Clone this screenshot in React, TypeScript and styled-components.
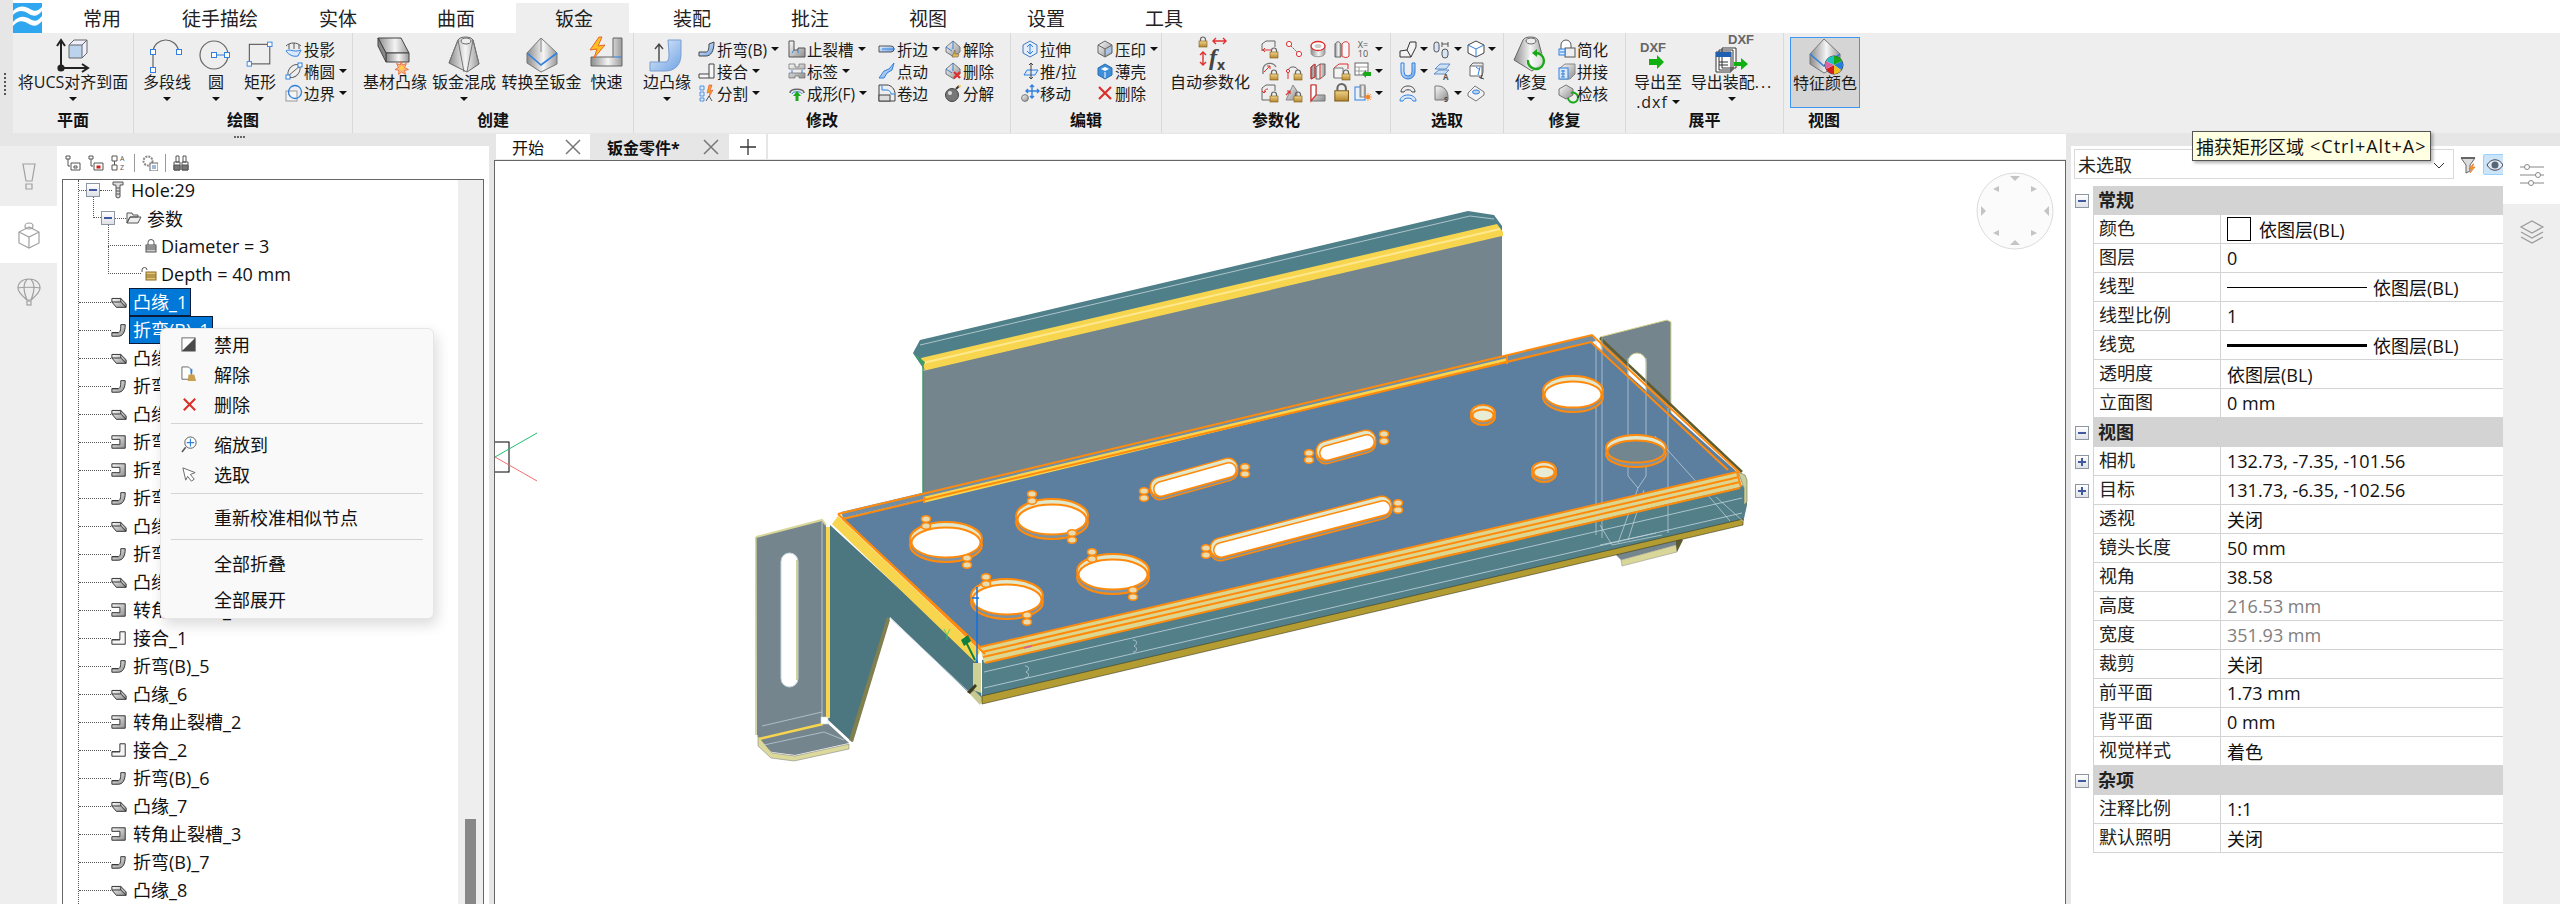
import React from "react";
import styled, { createGlobalStyle } from "styled-components";

const FONT = `"Open Sans", "Noto Sans CJK SC", sans-serif`;

const GlobalStyle = createGlobalStyle`
  html, body { margin: 0; padding: 0; background: #e6e6e6; }
  body { font-family: ${FONT}; color: #111; }
  * { box-sizing: border-box; }
`;

const Page = styled.div`
  position: relative;
  width: 2560px;
  height: 904px;
  overflow: hidden;
  display: flex;
  flex-direction: column;
  background: #e6e6e6;
`;

const Svg = styled.svg<{ $ml?: number; $mt?: number }>`
  display: block;
  flex: none;
  overflow: visible;
  margin-left: ${(p) => p.$ml ?? 0}px;
  margin-top: ${(p) => p.$mt ?? 0}px;
`;
const HiddenDefs = styled.svg`
  position: absolute;
`;

/* ---------- top tabs ---------- */
const TabBar = styled.div`
  display: flex;
  height: 33px;
  background: #fff;
  flex: none;
`;
const Grip = styled.div`
  width: 13px;
  background: #e6e6e6;
  flex: none;
`;
const LogoBox = styled.div`
  width: 31px;
  padding-top: 3px;
  flex: none;
`;
const Tab = styled.div<{ $active?: boolean }>`
  width: 113px;
  margin-right: 5px;
  margin-top: 3px;
  display: flex;
  align-items: center;
  justify-content: center;
  font-size: 19px;
  padding-left: 3px;
  color: #222;
  background: ${(p) => (p.$active ? "#eeeeee" : "transparent")};
`;

/* ---------- ribbon ---------- */
const Ribbon = styled.div`
  display: flex;
  height: 100px;
  flex: none;
  background: #eeeeee;
`;
const RibbonGrip = styled.div`
  width: 13px;
  flex: none;
  background: #e6e6e6;
  display: flex;
  flex-direction: column;
  align-items: center;
  gap: 2px;
  padding-top: 40px;
  padding-right: 3px;
  i {
    width: 2px;
    height: 2px;
    background: #555;
  }
`;
const Group = styled.div<{ $w: number; $last?: boolean }>`
  width: ${(p) => p.$w}px;
  flex: none;
  display: flex;
  flex-direction: column;
  border-right: ${(p) => (p.$last ? "none" : "1px solid #d9d9d9")};
`;
const GroupBody = styled.div<{ $pad?: number }>`
  height: 76px;
  display: flex;
  padding-left: ${(p) => p.$pad ?? 0}px;
`;
const GroupLabel = styled.div`
  height: 24px;
  line-height: 22px;
  text-align: center;
  font-size: 16px;
  font-weight: 700;
  color: #111;
`;
const BigBtn = styled.div<{ $w: number; $on?: boolean }>`
  width: ${(p) => p.$w}px;
  flex: none;
  display: flex;
  flex-direction: column;
  align-items: center;
  font-size: 16px;
  line-height: 20px;
  white-space: nowrap;
  color: #1a1a1a;
  padding-top: ${(p) => (p.$on ? 1 : 5)}px;
  margin-top: ${(p) => (p.$on ? 4 : 0)}px;
  height: ${(p) => (p.$on ? 71 : 76)}px;
  background: ${(p) => (p.$on ? "#d5d5d5" : "transparent")};
  border: ${(p) => (p.$on ? "1px solid #3f96f0" : "none")};
`;
const BigIcon = styled.div`
  height: 34px;
  display: flex;
  align-items: center;
  justify-content: center;
`;
const Caret = styled.span`
  display: inline-block;
  flex: none;
  width: 0;
  height: 0;
  border-left: 4px solid transparent;
  border-right: 4px solid transparent;
  border-top: 4px solid #111;
`;
const CaretLine = styled.div`
  height: 14px;
  display: flex;
  align-items: center;
`;
const SecondLine = styled.div`
  display: flex;
  align-items: center;
  gap: 4px;
  letter-spacing: 1px;
`;
const Dotted = styled.span`
  letter-spacing: 2px;
`;
const SmallCol = styled.div<{ $w?: number; $ml?: number }>`
  width: ${(p) => (p.$w ? `${p.$w}px` : "auto")};
  margin-left: ${(p) => p.$ml ?? 0}px;
  flex: none;
  display: flex;
  flex-direction: column;
  padding-top: 5px;
`;
const SmallBtn = styled.div`
  height: 22px;
  display: flex;
  align-items: center;
  gap: 1px;
  font-size: 15.5px;
  white-space: nowrap;
  color: #1a1a1a;
  ${Caret} {
    margin-left: 3px;
  }
`;
const IconGrid = styled.div<{ $cols: string }>`
  display: grid;
  grid-template-columns: ${(p) => p.$cols};
  grid-auto-rows: 22px;
  padding-top: 5px;
  justify-items: center;
  align-items: center;
`;
const IconCell = styled.div`
  display: flex;
  align-items: center;
  justify-self: start;
  gap: 3px;
`;
const XTen = styled.span`
  font-size: 9px;
  line-height: 9px;
  width: 18px;
  height: 18px;
  color: #555;
  display: flex;
  flex-direction: column;
  align-items: center;
`;

/* ---------- body ---------- */
const Body = styled.div`
  flex: 1;
  display: flex;
  min-height: 0;
  position: relative;
`;
const SplitDots = styled.div`
  position: absolute;
  left: 234px;
  top: 3px;
  display: flex;
  gap: 1px;
  i {
    width: 2px;
    height: 2px;
    background: #666;
  }
`;
const LeftDock = styled.div`
  width: 489px;
  margin-top: 13px;
  display: flex;
  flex: none;
`;
const Rail = styled.div`
  width: 57px;
  flex: none;
  display: flex;
  flex-direction: column;
  background: #eeeeee;
`;
const RailTab = styled.div<{ $on?: boolean; $h: number }>`
  height: ${(p) => p.$h}px;
  display: flex;
  align-items: center;
  justify-content: center;
  background: ${(p) => (p.$on ? "#fff" : "transparent")};
`;
const BrowserPanel = styled.div`
  flex: 1;
  display: flex;
  flex-direction: column;
  background: #fff;
  padding: 0 5px;
  min-width: 0;
`;
const BrowserTools = styled.div`
  height: 33px;
  flex: none;
  display: flex;
  align-items: center;
  padding-left: 3px;
  gap: 7px;
`;
const ToolSep = styled.span`
  width: 1px;
  height: 18px;
  background: #999;
`;
const TreeBox = styled.div`
  flex: 1;
  min-height: 0;
  display: flex;
  border: 1px solid #666;
  border-bottom: none;
`;
const TreeScroll = styled.div`
  flex: 1;
  min-width: 0;
  overflow: hidden;
`;
const TreeTrunk = styled.div`
  margin-left: 15px;
  border-left: 1px dotted #555;
  display: flex;
  flex-direction: column;
`;
const TreeRow = styled.div<{ $first?: boolean }>`
  height: ${(p) => (p.$first ? 24 : 28)}px;
  padding-bottom: ${(p) => (p.$first ? 4 : 0)}px;
  flex: none;
  display: flex;
  align-items: center;
  font-size: 18px;
  color: #111;
  white-space: nowrap;
`;
const Dots = styled.span<{ $w: number }>`
  flex: none;
  width: ${(p) => p.$w}px;
  border-top: 1px dotted #555;
`;
const Elbow = styled.span<{ $left: number; $w: number; $up: number; $h: number }>`
  flex: none;
  align-self: flex-start;
  margin-left: ${(p) => p.$left}px;
  margin-top: -${(p) => p.$up}px;
  width: ${(p) => p.$w}px;
  height: ${(p) => p.$h}px;
  border-left: 1px dotted #555;
  border-bottom: 1px dotted #555;
`;
const Expander = styled.span<{ $plus?: boolean }>`
  flex: none;
  position: relative;
  width: 14px;
  height: 14px;
  border: 1px solid #8d96a3;
  background: linear-gradient(#fff, #dfe1e6);
  &::before {
    content: "";
    position: absolute;
    left: 2px;
    right: 2px;
    top: 5px;
    height: 2px;
    background: #3f5aa0;
  }
  ${(p) =>
    p.$plus &&
    `&::after {
    content: "";
    position: absolute;
    top: 2px;
    bottom: 2px;
    left: 5px;
    width: 2px;
    background: #3f5aa0;
  }`}
`;
const NodeLabel = styled.span<{ $sel?: boolean }>`
  margin-left: 2px;
  height: 28px;
  line-height: 26px;
  padding: 0 3px;
  background: ${(p) => (p.$sel ? "#0078d7" : "transparent")};
  color: ${(p) => (p.$sel ? "#fff" : "#111")};
  border: 1px solid ${(p) => (p.$sel ? "#0a1c3a" : "transparent")};
`;
const PlainLabel = styled.span<{ $ml: number }>`
  margin-left: ${(p) => p.$ml}px;
`;
const ScrollTrack = styled.div`
  width: 25px;
  flex: none;
  background: #eeeeee;
  padding: 639px 7px 0;
`;
const ScrollThumb = styled.div`
  height: 100px;
  background: #888;
`;

/* ---------- context menu ---------- */
const Menu = styled.div`
  position: absolute;
  left: 160px;
  top: 328px;
  width: 274px;
  height: 291px;
  padding: 0 10px;
  background: #f9f9f9;
  border: 1px solid #e6e6e6;
  border-radius: 6px;
  box-shadow: 3px 6px 14px rgba(0, 0, 0, 0.14);
  font-size: 18px;
  color: #111;
`;
const MenuItem = styled.div<{ $tall?: boolean }>`
  height: ${(p) => (p.$tall ? 36 : 30)}px;
  display: flex;
  align-items: center;
`;
const MenuIcon = styled.span`
  width: 43px;
  padding-left: 10px;
  flex: none;
  display: flex;
`;
const MenuSep = styled.div`
  height: 1px;
  margin: 4px 0 5px;
  background: #d4d4d4;
`;

/* ---------- centre ---------- */
const Gutter = styled.div`
  width: 5px;
  flex: none;
`;
const Center = styled.div`
  width: 1572px;
  flex: none;
  display: flex;
  flex-direction: column;
  padding-top: 1px;
`;
const DocTabs = styled.div`
  height: 26px;
  flex: none;
  display: flex;
  padding: 0 0 1px 2px;
  gap: 1px;
`;
const DocTab = styled.div<{ $w: number; $on?: boolean }>`
  width: ${(p) => p.$w}px;
  flex: none;
  display: flex;
  align-items: center;
  justify-content: space-between;
  padding: 0 9px 0 16px;
  font-size: 16px;
  font-weight: ${(p) => (p.$on ? 700 : 400)};
  background: ${(p) => (p.$on ? "#e6e6e6" : "#fff")};
  color: #111;
`;
const AddTab = styled.div`
  width: 37px;
  flex: none;
  background: #fff;
  display: flex;
  align-items: center;
  justify-content: center;
  margin-right: 1px;
`;
const TabFill = styled.div`
  flex: 1;
  background: #fff;
`;
const Viewport = styled.div`
  flex: 1;
  position: relative;
  background: #fff;
  border: 1px solid #666;
  border-bottom: none;
  overflow: hidden;
`;
const ModelCanvas = styled.svg`
  position: absolute;
  left: 0;
  top: 0;
  display: block;
`;

/* ---------- properties ---------- */
const RightDock = styled.div`
  flex: 1;
  margin-top: 13px;
  display: flex;
  min-width: 0;
`;
const PropPanel = styled.div`
  width: 432px;
  flex: none;
  background: #fff;
  display: flex;
  flex-direction: column;
`;
const PropTop = styled.div`
  height: 40px;
  flex: none;
  display: flex;
  align-items: flex-start;
  padding: 3px 3px 0 3px;
`;
const Combo = styled.div`
  width: 380px;
  height: 30px;
  flex: none;
  border: 1px solid #d9d9d9;
  display: flex;
  align-items: center;
  justify-content: space-between;
  padding: 0 8px 0 3px;
  font-size: 18px;
  color: #222;
`;
const ToolBtn = styled.div<{ $on?: boolean }>`
  width: 23px;
  height: 21px;
  margin: 5px 0 0 3px;
  flex: none;
  display: flex;
  align-items: center;
  justify-content: center;
  border-radius: 2px;
  background: ${(p) => (p.$on ? "#cce4f7" : "transparent")};
  border: 1px solid ${(p) => (p.$on ? "#99d1ff" : "transparent")};
`;
const PropHeader = styled.div`
  height: 29px;
  display: grid;
  grid-template-columns: 22px 1fr;
  align-items: center;
  font-size: 18px;
  font-weight: 700;
  color: #222;
`;
const HeaderText = styled.div`
  height: 29px;
  line-height: 29px;
  padding-left: 5px;
  background: #d3d3d3;
`;
const PropRow = styled.div`
  height: 29px;
  display: grid;
  grid-template-columns: 22px 128px 1fr;
  font-size: 18px;
  color: #222;
`;
const ExpandCell = styled.div`
  display: flex;
  align-items: center;
  padding-left: 4px;
`;
const PropName = styled.div`
  line-height: 27px;
  padding-left: 5px;
  border-left: 1px solid #d3d3d3;
  border-right: 1px solid #d3d3d3;
  border-bottom: 1px solid #d3d3d3;
`;
const PropValue = styled.div<{ $dim?: boolean }>`
  display: flex;
  align-items: center;
  gap: 6px;
  padding-left: 6px;
  border-bottom: 1px solid #d3d3d3;
  color: ${(p) => (p.$dim ? "#808080" : "#111")};
  white-space: nowrap;
`;
const Swatch = styled.span`
  width: 24px;
  height: 24px;
  margin-right: 2px;
  flex: none;
  background: #fff;
  border: 1px solid #000;
`;
const LineSample = styled.span<{ $h: number }>`
  width: 140px;
  height: ${(p) => p.$h}px;
  flex: none;
  background: #000;
`;
const Tooltip = styled.div`
  position: absolute;
  left: 2192px;
  top: 131px;
  width: 239px;
  height: 30px;
  display: flex;
  align-items: center;
  gap: 6px;
  padding-left: 3px;
  background: #ffffe1;
  border: 1px solid #555;
  box-shadow: 2px 2px 3px rgba(0, 0, 0, 0.3);
  font-size: 18px;
  color: #111;
  white-space: nowrap;
`;
const TipKeys = styled.span`
  letter-spacing: 1px;
`;

/* ---------- icon drawing ---------- */
const Defs = () => (
  <HiddenDefs width="0" height="0">
    <defs>
      <linearGradient id="metal" x1="0" y1="0" x2="1" y2="1">
        <stop offset="0" stopColor="#fbfbfb" />
        <stop offset="1" stopColor="#8e8e8e" />
      </linearGradient>
      <linearGradient id="metalH" x1="0" y1="0" x2="1" y2="0">
        <stop offset="0" stopColor="#8c8c8c" />
        <stop offset="0.55" stopColor="#f5f5f5" />
        <stop offset="1" stopColor="#9a9a9a" />
      </linearGradient>
      <linearGradient id="blueG" x1="0" y1="0" x2="1" y2="1">
        <stop offset="0" stopColor="#eaf2fc" />
        <stop offset="1" stopColor="#6fa2e4" />
      </linearGradient>
      <linearGradient id="gold" x1="0" y1="0" x2="0" y2="1">
        <stop offset="0" stopColor="#f0d48a" />
        <stop offset="1" stopColor="#b8862e" />
      </linearGradient>
    </defs>
  </HiddenDefs>
);

const Lock = ({ x, y }: { x: number; y: number }) => (
  <g transform={`translate(${x} ${y})`}>
    <path d="M1.5 4V2.5a2.5 2.5 0 0 1 5 0V4" fill="none" stroke="#666" strokeWidth="1.2" />
    <rect x="0" y="4" width="8" height="6" fill="url(#gold)" stroke="#7a5a1a" strokeWidth="0.6" />
  </g>
);
const Handle = ({ x, y, s = 4 }: { x: number; y: number; s?: number }) => (
  <rect x={x - s / 2} y={y - s / 2} width={s} height={s} fill="#fff" stroke="#2f80e0" strokeWidth="1" />
);
const BLUE = "#2f80e0";
const GR = "#666";
const RD = "#e03030";

const small: Record<string, React.ReactNode> = {
  project: (
    <>
      <path d="M1 6C5 2 12 2 16 6M4 4v5M9 3v6M14 5v4" fill="none" stroke="#555" strokeWidth="1" />
      <path d="M1 11c4-3 7 2 15-1l-3 6c-5 1-9-1-12-5z" fill="#dbe9fa" stroke={BLUE} />
    </>
  ),
  ellipse: (
    <>
      <ellipse cx="9" cy="9" rx="5" ry="7.5" transform="rotate(40 9 9)" fill="none" stroke={GR} />
      <path d="M3 14L15 4" stroke={GR} />
      <Handle x={3} y={15} />
      <Handle x={15} y={3} />
    </>
  ),
  boundary: (
    <>
      <rect x="1" y="7" width="11" height="10" fill="#f4f4f4" stroke="#999" />
      <circle cx="10" cy="8" r="6.5" fill="none" stroke={BLUE} strokeWidth="1.3" />
    </>
  ),
  bend: (
    <path d="M1 16v-4h7c2 0 3-2 3-8l5-2c0 9-3 14-8 14z" fill="url(#blueG)" stroke="#444" />
  ),
  join: <path d="M1 16v-4h10V2h5v14z M11 12v4" fill="#f6f6f6" stroke="#444" />,
  split: (
    <>
      <path d="M2 2h4v4H2zM2 8h4v4H2zM2 14h4v3H2z" fill="#dfe9f7" stroke={BLUE} strokeWidth="0.8" />
      <path d="M11 1l-2 8 3-1-1 5 4-7-3 1 2-6z" fill="#f5a623" stroke={RD} strokeWidth="0.5" />
      <path d="M8 17l3-5 3 5" fill="none" stroke="#555" />
    </>
  ),
  relief: (
    <>
      <path d="M1 1h5v9h4v-2h7v9H1z" fill="url(#metal)" stroke="#555" />
      <path d="M6 10l-2 3M10 10v3" stroke={BLUE} />
    </>
  ),
  tag: (
    <>
      <path d="M1 2h6v3h4V2h6v5H1zM1 11h16v5h-6v-2H7v2H1z" fill="url(#metal)" stroke="#777" strokeWidth="0.8" />
      <path d="M4 8v3M14 8v3" stroke={BLUE} />
    </>
  ),
  form: (
    <>
      <path d="M2 9c0-5 14-5 14 0" fill="none" stroke="#666" strokeWidth="1.5" />
      <path d="M4 10c0-3 10-3 10 0" fill="none" stroke={BLUE} />
      <path d="M9 7l4 5h-2.5v5h-3v-5H5z" fill="#1faa1f" />
    </>
  ),
  hem: (
    <>
      <path d="M1 6h12a3 3 0 0 1 0 6H1z" fill="url(#blueG)" stroke="#555" />
      <path d="M4 9h13" stroke={BLUE} />
    </>
  ),
  jog: <path d="M1 16l5-7 5-2 5-6-2 7-5 3-3 5z" fill="url(#blueG)" stroke={BLUE} />,
  roll: (
    <>
      <path d="M1 1h8c4 0 8 4 8 9v7H1z" fill="none" stroke="#444" />
      <path d="M4 1v5h5c2 0 4 2 4 4h4" fill="#e8eef7" stroke={BLUE} />
      <rect x="1" y="11" width="11" height="6" fill="#ddd" stroke="#444" />
    </>
  ),
  unbend: (
    <>
      <path d="M9 1l7 6v5l-6 5-8-5V7z" fill="url(#metal)" stroke="#777" />
      <path d="M9 1v8M2 7l6 4" stroke={BLUE} />
      <path d="M11 10v4h4l-1 3H8z" fill="#e6b84a" stroke="#555" strokeWidth="0.5" />
    </>
  ),
  delFeat: (
    <>
      <path d="M9 1l7 6v5l-6 5-8-5V7z" fill="url(#metal)" stroke="#777" />
      <path d="M9 1v8M2 7l6 4" stroke={BLUE} />
      <path d="M10 10l6 6M16 10l-6 6" stroke={RD} strokeWidth="2.4" />
    </>
  ),
  bomb: (
    <>
      <circle cx="8" cy="11" r="6.5" fill="#777" stroke="#444" />
      <circle cx="6" cy="9" r="2" fill="#ddd" />
      <path d="M12 5l3-3" stroke="#333" strokeWidth="2" />
      <path d="M14 2l3-1-1 3z" fill="#f0c020" />
    </>
  ),
  stretch: (
    <>
      <path d="M9 1l7 4v8l-7 4-7-4V5z" fill="#e4eefa" stroke="#4477bb" />
      <path d="M9 4v10M6 7l3-3 3 3M6 11l3 3 3-3" fill="none" stroke={BLUE} />
    </>
  ),
  pushpull: (
    <>
      <path d="M3 13L6 8h11l-3 5z" fill="#dbe9fa" stroke={BLUE} />
      <path d="M10 1v16M8 3l2-2 2 2M8 15l2 2 2-2" fill="none" stroke="#444" />
    </>
  ),
  move: (
    <>
      <path d="M11 1v13M5 7h13M9 3l2-2 2 2M9 12l2 2 2-2M7 5L5 7l2 2M16 5l2 2-2 2" fill="none" stroke={BLUE} strokeWidth="1.4" />
      <circle cx="4" cy="14" r="3.4" fill="url(#metal)" stroke="#777" />
    </>
  ),
  imprint: (
    <>
      <path d="M9 1l7 4v8l-7 4-7-4V5z" fill="url(#metal)" stroke="#666" />
      <path d="M9 9v8M2 5l7 4 7-4" fill="none" stroke="#666" />
      <path d="M10 10l5-3v5l-5 3z" fill="#a7c5ea" />
    </>
  ),
  shell: (
    <>
      <path d="M9 2l7 4v7l-7 4-7-4V6z" fill="#3f8ed8" stroke="#2a6cb0" />
      <path d="M5 7l4-2 4 2-4 2z" fill="#fff" />
      <path d="M9 10v6" stroke="#fff" />
    </>
  ),
  redx: <path d="M3 3l12 12M15 3L3 15" stroke="#d9302a" strokeWidth="2.2" />,
  pa1: (
    <>
      <path d="M1 11V4l4-3h9v6" fill="none" stroke="#666" />
      <path d="M1 10h9M2 10l2-2M2 10l2 2" fill="none" stroke={RD} />
      <Lock x={9} y={8} />
    </>
  ),
  pa2: (
    <>
      <circle cx="4" cy="4" r="2.6" fill="#fff" stroke={RD} />
      <circle cx="14" cy="14" r="2.6" fill="#fff" stroke={RD} />
      <path d="M6 6l6 6" stroke="#666" strokeDasharray="2 1" />
    </>
  ),
  pa3: (
    <>
      <path d="M2 5v8c0 5 14 5 14 0V5" fill="url(#metalH)" stroke="#999" />
      <ellipse cx="9" cy="6" rx="7" ry="4.5" fill="#fff" stroke={RD} strokeWidth="1.3" />
      <ellipse cx="9" cy="6" rx="3.5" ry="2" fill="#ccc" />
    </>
  ),
  pa4: (
    <>
      <path d="M2 4c2-3 4-3 6 0v13H2z" fill="url(#metalH)" stroke="#666" />
      <path d="M9 4c2-3 6-3 7 0v12c-1 2-5 2-7 0z" fill="#f8f8f8" stroke={RD} />
    </>
  ),
  pb1: (
    <>
      <path d="M2 12V7a7 7 0 0 1 13-2" fill="none" stroke="#777" strokeWidth="1.3" />
      <path d="M3 10l6-6M6 4h3v3" fill="none" stroke={RD} />
      <Lock x={9} y={8} />
    </>
  ),
  pb2: (
    <>
      <path d="M3 8a5.5 5.5 0 0 1 10 0" fill="none" stroke="#666" />
      <path d="M3 8v9" stroke={RD} />
      <circle cx="3" cy="9" r="1.6" fill="#fff" stroke={RD} />
      <Lock x={9} y={8} />
    </>
  ),
  pb3: (
    <>
      <path d="M2 5l4-3v13l-4 2zM7 5l4-3h5v11l-5 4H7z" fill="url(#metalH)" stroke="#666" />
      <path d="M2 5l4-3v13l-4 2zM11 2v15" fill="none" stroke={RD} />
    </>
  ),
  pb4: (
    <>
      <path d="M1 16V6l5-4h9v5" fill="none" stroke={RD} />
      <path d="M1 6h9v10H1z" fill="#f4f4f4" stroke="#777" />
      <Lock x={9} y={8} />
    </>
  ),
  pb5: (
    <>
      <rect x="1" y="1" width="13" height="12" fill="#fff" stroke="#666" />
      <path d="M1 5h13M1 9h13M5 5v8" stroke="#888" strokeWidth="0.8" />
      <path d="M8 12l4-4v2h5v4h-5v2z" fill="#18a818" />
    </>
  ),
  pc1: (
    <>
      <path d="M1 11V4l4-3h9v6" fill="none" stroke="#666" />
      <path d="M3 9c0-3 2-4 4-4M3 9l-2-2M3 9l2-2" fill="none" stroke={RD} />
      <path d="M1 11v5h8" fill="none" stroke="#666" />
      <Lock x={9} y={8} />
    </>
  ),
  pc2: (
    <>
      <path d="M1 16l7-15 4 6v9z" fill="url(#metal)" stroke="#888" />
      <path d="M1 11l4-4M5 7H2M5 7v3" fill="none" stroke={RD} strokeWidth="1.2" />
      <Lock x={9} y={8} />
    </>
  ),
  pc3: (
    <>
      <path d="M2 1h5v10h9v6H2z" fill="url(#metal)" stroke="#777" />
      <path d="M2 1h5v10l-5 6z" fill="#fff" stroke={RD} strokeWidth="1.2" />
    </>
  ),
  pc4: (
    <g transform="translate(1 0) scale(1.7)">
      <Lock x={0.5} y={0} />
    </g>
  ),
  pc5: (
    <>
      <rect x="1" y="3" width="10" height="13" fill="#e8f0fa" stroke={BLUE} />
      <rect x="6" y="1" width="5" height="12" fill="url(#metalH)" stroke="#888" />
      <circle cx="14" cy="13" r="2" fill="#f77f1a" />
      <path d="M14 9v8M10 13h8M11 10l6 6M17 10l-6 6" stroke="#f77f1a" strokeWidth="0.7" />
    </>
  ),
  sa1: <path d="M1 17v-6l7-1 3-8h6v5l-5 10z M8 10l4 7" fill="#f3f3f3" stroke="#333" strokeLinejoin="round" />,
  sa2: (
    <>
      <rect x="1" y="2" width="5" height="10" rx="2.5" fill="#d6e5f7" stroke="#555" />
      <rect x="9" y="9" width="6" height="9" rx="3" fill="#d6e5f7" stroke="#555" />
      <path d="M9 2v5M15 2v5M9 4h6" stroke="#555" />
    </>
  ),
  sa3: (
    <>
      <path d="M9 1l8 4v8l-8 4-8-4V5z" fill="#fff" stroke="#444" />
      <path d="M1 5l8 4 8-4M9 9v8" fill="none" stroke={BLUE} />
    </>
  ),
  sb1: (
    <path
      d="M2 1v9a7 7 0 0 0 14 0V1h-3v9a4 4 0 0 1-8 0V1z"
      fill="url(#blueG)"
      stroke={BLUE}
    />
  ),
  sb2: (
    <>
      <path d="M2 7l5-5h10l-4 5zM1 12l5-4h10l-4 4z" fill="#cfe0f5" stroke="#3c78c0" strokeWidth="0.8" />
      <text x="10" y="18" fontSize="8" fontWeight="700" fill="#555" fontFamily="Open Sans">
        A
      </text>
    </>
  ),
  sb3: (
    <>
      <path d="M3 4h12v10H3z" fill="#fff" stroke="#666" />
      <path d="M3 4l3-3h10v9l-1 4" fill="none" stroke="#666" />
      <path d="M9 5l4 3M13 5l-2 8" stroke={BLUE} />
      <path d="M12 15l5 2M15 13l-1 4" stroke="#444" />
    </>
  ),
  sc1: (
    <>
      <path d="M2 8c0-8 14-8 14 0h-3c-1-3-7-3-8 0z" fill="#eee" stroke="#444" />
      <path d="M1 17c0-8 16-8 16 0h-3c-1-4-9-4-10 0z" fill="#dbe9fa" stroke={BLUE} />
    </>
  ),
  sc2: (
    <>
      <path d="M2 16V2h3c6 0 10 5 10 11v3z" fill="url(#metal)" stroke="#777" />
      <text x="11" y="18" fontSize="7" fontWeight="700" fill="#444" fontFamily="Open Sans">
        S
      </text>
    </>
  ),
  sc3: (
    <>
      <path d="M1 9l7-7 9 6v3l-8 6-8-5z" fill="#f3f3f3" stroke="#777" />
      <ellipse cx="9" cy="8" rx="3.5" ry="2" fill="#bcd3ee" stroke={BLUE} />
    </>
  ),
  simplify: (
    <>
      <path d="M3 9V5a5 5 0 0 1 10 0v4" fill="#fff" stroke="#555" />
      <rect x="7" y="8" width="10" height="9" fill="#eee" stroke="#555" />
      <rect x="1" y="9" width="6" height="6" fill="#dbe9fa" stroke={BLUE} />
      <path d="M2 12h5" stroke={BLUE} />
    </>
  ),
  stitch: (
    <>
      <path d="M2 6l5-4h10v10l-5 5H2z" fill="url(#metal)" stroke="#888" />
      <rect x="1" y="6" width="9" height="11" fill="#dbe9fa" stroke={BLUE} />
      <path d="M5 8v7M3 9h4M3 12h4M3 15h4" stroke={BLUE} />
    </>
  ),
  check: (
    <>
      <path d="M8 1l7 4v6l-7 4-7-4V5z" fill="url(#metal)" stroke="#777" />
      <path d="M8 8a5 5 0 1 1-3 5" fill="none" stroke="#18a818" strokeWidth="2" transform="translate(5 1)" />
    </>
  ),
  /* tree + menu */
  nFlange: <path d="M1 5h10l6 6v4H6l-5-6zM1 9h10l6 6M11 5v4" fill="url(#metal)" stroke="#333" strokeWidth="1.1" />,
  nBend: <path d="M1 16v-4h7c2 0 3-2 3-9h5c0 9-3 13-8 13zM1 12h7" fill="url(#metal)" stroke="#333" strokeWidth="1.1" />,
  nBox: <path d="M1 2h15v14H1v-4h9V6H1z" fill="url(#metal)" stroke="#333" strokeWidth="1.1" />,
  nJoin: <path d="M1 16v-5h9V2h6v14zM1 11h9" fill="#f5f5f5" stroke="#333" strokeWidth="1.1" />,
  disable: (
    <>
      <rect x="1" y="2" width="14" height="14" fill="#fff" stroke="#666" />
      <path d="M15 2v14H1z" fill="#4a4a4a" />
    </>
  ),
  clean: (
    <>
      <path d="M1 1h7l3 3v10H1z" fill="#fff" stroke="#666" />
      <path d="M11 3v5" stroke={BLUE} strokeWidth="2" />
      <path d="M8 9h6l2 7H7z" fill="#c8a050" />
    </>
  ),
  zoomTo: (
    <>
      <circle cx="10" cy="7" r="6" fill="#fff" stroke="#555" />
      <path d="M5 12l-4 5" stroke="#555" strokeWidth="1.6" />
      <path d="M10 3v8M6 7h8" stroke={BLUE} strokeWidth="1.2" />
    </>
  ),
  pointer: <path d="M2 2l13 5-5 2 4 5-3 2-4-5-2 4z" fill="#fff" stroke="#666" strokeLinejoin="round" />,
};

const Icon = ({ n, s = 18 }: { n: string; s?: number }) => (
  <Svg width={s} height={s} viewBox="0 0 18 18" strokeWidth="1">
    {small[n]}
  </Svg>
);

const big: Record<string, React.ReactNode> = {
  ucs: (
    <>
      <path d="M6 31V4M2 9l4-6 4 6M6 31h26M27 27l6 4-6 4" fill="none" stroke="#222" strokeWidth="2" />
      <circle cx="6" cy="31" r="3.6" fill="#222" />
      <path d="M14 8l5-5h13v13l-5 5M27 8l5-5" fill="#eef" stroke="#666" />
      <path d="M14 8h13v13H14z" fill="#bcd3ee" stroke="#666" />
    </>
  ),
  pline: (
    <>
      <path d="M4 33V15C5 0 27-2 30 15" fill="none" stroke="#666" strokeWidth="1.2" />
      <Handle x={4} y={15} s={5} />
      <Handle x={30} y={15} s={5} />
      <Handle x={4} y={33} s={5} />
    </>
  ),
  circle: (
    <>
      <circle cx="16" cy="18" r="14" fill="none" stroke="#666" strokeWidth="1.2" />
      <path d="M16 18h14" stroke={BLUE} />
      <Handle x={16} y={18} s={5} />
      <Handle x={29} y={18} s={5} />
    </>
  ),
  rect: (
    <>
      <rect x="6" y="6" width="23" height="22" fill="none" stroke="#555" strokeWidth="1.2" />
      <Handle x={29} y={6} s={5} />
      <Handle x={6} y={28} s={5} />
    </>
  ),
  baseFlange: (
    <>
      <path d="M1 1h23l8 15H9z" fill="url(#metalH)" stroke="#444" />
      <path d="M9 16h23v9H9z" fill="url(#metalH)" stroke="#444" />
      <path d="M1 1v8l8 16V16z" fill="#888" stroke="#444" />
      <path d="M24 24l1.5 4 4-1.5-2 4 4 2-4 1 1 4-4-2.5-3 2.5 .5-4-4-1 3.5-2-2-4 4 1.5z" fill="#f5b98a" stroke="#e8662a" strokeWidth="0.8" />
      <circle cx="24.5" cy="31" r="2" fill="#ffd040" />
    </>
  ),
  loft: (
    <>
      <path d="M12 3C14-1 25-1 27 3l6 24-12 8L3 26z" fill="url(#metalH)" stroke="#666" />
      <path d="M12 3l6 32M27 3l-6 32M12 3L3 26M27 3l6 24" stroke="#777" fill="none" />
      <ellipse cx="20" cy="4" rx="5" ry="3" fill="#eee" stroke="#666" />
    </>
  ),
  convert: (
    <>
      <path d="M17 1L33 16v11L17 35 3 26V16z" fill="url(#metalH)" stroke="#777" />
      <path d="M3 16l14 12 16-12" fill="none" stroke={BLUE} strokeWidth="1.6" />
      <path d="M17 1v14" stroke="#888" />
    </>
  ),
  quick: (
    <>
      <path d="M24 1h9v28H2V20h22z" fill="url(#metalH)" stroke="#666" />
      <path d="M24 20h9" stroke={BLUE} />
      <path d="M10 0l-9 13 7-1-3 9 11-13-7 1 4-9z" fill="#ffc020" stroke="#e8662a" />
    </>
  ),
  edgeFlange: (
    <>
      <path d="M10 26V8M6 12l4-5 4 5" fill="none" stroke="#444" strokeWidth="1.4" />
      <path d="M19 3h13v14c0 11-6 17-16 17H1V25h15c3 0 4-3 4-8z" fill="url(#blueG)" stroke="#7a9fcf" />
    </>
  ),
  fx: (
    <>
      <Lock x={7} y={0} />
      <path d="M25 4h11M27 1l-3 3 3 3M34 1l3 3-3 3" transform="translate(-3 0)" fill="none" stroke={RD} strokeWidth="1.4" />
      <path d="M11 15v13M8 18l3-3 3 3M8 25l3 3 3-3" fill="none" stroke={RD} strokeWidth="1.4" />
      <text x="17" y="28" fontSize="24" fontStyle="italic" fontWeight="700" fill="#444" fontFamily="Liberation Serif">
        f
      </text>
      <text x="25" y="33" fontSize="14" fontWeight="700" fill="#444" fontFamily="Open Sans">
        x
      </text>
    </>
  ),
  repair: (
    <>
      <path d="M10 3c2-4 13-4 15 0l6 22-12 9L1 23z" fill="url(#metalH)" stroke="#666" />
      <ellipse cx="18" cy="4" rx="5" ry="3" fill="#eee" stroke="#666" />
      <circle cx="24" cy="24" r="9" fill="#fff" opacity="0.6" />
      <path d="M22 16a8 8 0 1 1-7 7" fill="none" stroke="#18a818" strokeWidth="2.4" />
      <path d="M24 12l-5 4 5 4z" fill="#18a818" />
    </>
  ),
  dxf: (
    <>
      <text x="0" y="15" fontSize="13" fontWeight="700" fill="#666" fontFamily="Liberation Sans">
        DXF
      </text>
      <path d="M9 22h8v-4l7 7-7 7v-4H9z" fill="#10b010" />
    </>
  ),
  dxfAsm: (
    <>
      <text x="14" y="7" fontSize="13" fontWeight="700" fill="#666" fontFamily="Liberation Sans">
        DXF
      </text>
      <path d="M8 11h14v20H8zM5 13h14v20H5zM2 15h15v20H2z" fill="#fff" stroke="#333" />
      <rect x="2" y="15" width="15" height="5" fill="#2060b0" />
      <path d="M5 25h9M5 28h9" stroke="#333" />
      <path d="M20 25h7v-4l7 6-7 6v-4h-7z" fill="#10b010" />
    </>
  ),
  feature: (
    <>
      <path d="M17 1L33 16v11L17 35 3 26V16z" fill="url(#metalH)" stroke="#777" />
      <path d="M3 16l14 12 16-12" fill="none" stroke={BLUE} strokeWidth="1.6" />
      <circle cx="27" cy="27" r="9" fill="#fff" stroke="#333" strokeWidth="1" />
      <path d="M27 27V18a9 9 0 0 1 8 5z" fill="#18a818" />
      <path d="M27 27l8-4a9 9 0 0 1-1 9z" fill="#2080e0" />
      <path d="M27 27l7 5a9 9 0 0 1-7 4z" fill="#f0c020" />
      <path d="M27 27v9a9 9 0 0 1-8-5z" fill="#d02020" />
      <path d="M27 27l-8 4a9 9 0 0 1 0-8z" fill="#e060a0" />
      <path d="M27 27l-8-4a9 9 0 0 1 8-5z" fill="#20c0c0" />
    </>
  ),
};

const Big = ({ n, w = 36, h = 36 }: { n: string; w?: number; h?: number }) => (
  <Svg width={w} height={h} viewBox="0 0 36 36" strokeWidth="1">
    {big[n]}
  </Svg>
);

const Small = ({ n, t, caret }: { n: string; t: string; caret?: boolean }) => (
  <SmallBtn>
    <Icon n={n} />
    <span>{t}</span>
    {caret && <Caret />}
  </SmallBtn>
);

const Sized = ({ n, caret }: { n: string; caret?: boolean }) => (
  <IconCell>
    <Icon n={n} />
    {caret && <Caret />}
  </IconCell>
);

const LogoIcon = () => (
  <svg width="29" height="30" viewBox="0 0 29 30">
    <rect width="29" height="30" fill="#fff" />
    <path d="M0 8C6 2 12 3 17 6s8 2 12-2V0H0z" fill="#2ea6f0" />
    <path d="M0 19c6-7 12-6 17-3s8 2 12-3V8c-4 5-8 6-13 3S6 6 0 12z" fill="#2ea6f0" />
    <path d="M0 30h29v-12c-4 5-8 6-13 3S6 16 0 23z" fill="#2ea6f0" />
  </svg>
);

/* ---------- model ---------- */
const ORANGE = "#ff8a0c";
const PALE = "#dcd68e";
const GREY = "#75858d";
const TEAL = "#4f7f88";
const PLATE = "#5c7fa0";
const YELLOW = "#f8d54e";
const WIRE = "#c4d6de";

const Hole = ({ x, y, rx, ry, drop = 6, inner = "#fff" }: { x: number; y: number; rx: number; ry: number; drop?: number; inner?: string }) => (
  <g>
    <ellipse cx={x} cy={y + drop} rx={rx} ry={ry} fill="#7c93a6" stroke={ORANGE} strokeWidth="2" />
    <ellipse cx={x} cy={y} rx={rx} ry={ry} fill="#e2e8cc" stroke={ORANGE} strokeWidth="2" />
    <ellipse cx={x} cy={y + drop * 0.6} rx={rx - 1.5} ry={ry - 2} fill={inner} stroke={ORANGE} strokeWidth="2" />
  </g>
);
const Pair = ({ x, y }: { x: number; y: number }) => (
  <g fill="#e8dcb0" stroke={ORANGE} strokeWidth="1.6">
    <ellipse cx={x} cy={y} rx="4.5" ry="3.3" />
    <ellipse cx={x} cy={y + 7} rx="4.5" ry="3.3" />
  </g>
);
const Slot = ({ x1, y1, x2, y2 }: { x1: number; y1: number; x2: number; y2: number }) => (
  <g strokeLinecap="round" fill="none">
    <line x1={x1} y1={y1 + 3} x2={x2} y2={y2 + 3} stroke={ORANGE} strokeWidth="21" />
    <line x1={x1} y1={y1 + 3} x2={x2} y2={y2 + 3} stroke="#7c93a6" strokeWidth="18" />
    <line x1={x1} y1={y1} x2={x2} y2={y2} stroke={ORANGE} strokeWidth="21" />
    <line x1={x1} y1={y1} x2={x2} y2={y2} stroke="#e2e8cc" strokeWidth="18" />
    <line x1={x1 + 1} y1={y1 + 2} x2={x2 + 1} y2={y2 + 2} stroke={ORANGE} strokeWidth="16" />
    <line x1={x1 + 1} y1={y1 + 2} x2={x2 + 1} y2={y2 + 2} stroke="#fff" strokeWidth="13" />
  </g>
);

const Model = () => (
  <ModelCanvas width="1570" height="743" viewBox="495 161 1570 743">
    {/* ucs at the viewport edge */}
    <rect x="494" y="442" width="15" height="30" fill="none" stroke="#000" />
    <path d="M495 457l42-24" stroke="#1fc070" strokeWidth="1" />
    <path d="M495 457l42 24" stroke="#f07070" strokeWidth="1" />

    {/* nav wheel */}
    <circle cx="2015" cy="211" r="38" fill="#fbfbfb" stroke="#dcdcdc" />
    <g fill="#c4c4c4">
      <path d="M2010 176h10l-5 5z" />
      <path d="M2010 245h10l-5-5z" />
      <path d="M1981 206v10l5-5z" />
      <path d="M2049 206v10l-5-5z" />
      <path d="M1993 189l6-3v6z" />
      <path d="M2037 189l-6-3v6z" />
      <path d="M1993 233l6 3v-6z" />
      <path d="M2037 233l-6 3v-6z" />
    </g>

    {/* right bracket */}
    <path d="M1600 337l67-17 4 2v95l-30 20h-30z" fill={GREY} stroke={PALE} strokeWidth="1" />
    <rect x="1628" y="353" width="18" height="60" rx="9" fill="#fff" stroke="#c4c58a" />
    <path d="M1610 549l66-13v9l-55 15z" fill={GREY} />
    <path d="M1621 560l55-15 1 7-55 14z" fill="#d9d699" stroke="#888" strokeWidth="0.5" />
    <path d="M1676 536l7 4-6 12-1-7z" fill="#5c5a30" />

    {/* rear panel */}
    <path d="M920 340L1468 211l26 4 8 11v10L925 371l-12-18z" fill={TEAL} />
    <path d="M920 345L1470 216l24 3" fill="none" stroke={WIRE} strokeWidth="0.8" />
    <path d="M921 358L1497 224l6 8v4L925 371z" fill={YELLOW} />
    <path d="M923 363L1500 229" stroke="#ffe98f" strokeWidth="2" />
    <path d="M923 371L1502 236v120L923 494z" fill={GREY} />
    <path d="M923 367v127" stroke="#3f9a6a" strokeWidth="1.5" />
    <path d="M913 353l10 14 2-5" fill="#3f9a6a" />

    {/* left gusset */}
    <path d="M830 525l148 136 4 40-14-9-78-75-38 125-26-24z" fill="#4c7680" />
    <path d="M890 618l78 73 13-3" fill="none" stroke={WIRE} strokeWidth="0.7" />
    <path d="M887 617l3 3-37 122-4-2z" fill="#807f50" />
    <path d="M973 663h8v30l-8-3z" fill="#cfd093" />
    <path d="M968 692l12 13 3-6-8-8z" fill="#c7c890" />
    <path d="M967 692l8-8 2 2-7 8z" fill="#3e3a20" />

    {/* left bracket */}
    <path d="M756 537l66-17 4 5v196l-69 14z" fill={GREY} />
    <path d="M756 537l66-17 4 5" fill="none" stroke="#d9d699" strokeWidth="2" />
    <path d="M756 537v198" stroke="#c7c890" strokeWidth="1.5" />
    <path d="M822 522v198" stroke={WIRE} strokeWidth="0.8" />
    <rect x="781" y="553" width="17" height="134" rx="8.5" fill="#fff" stroke={WIRE} />
    <path d="M797 560v120" stroke="#cfd093" strokeWidth="2" />
    <rect x="826" y="527" width="4" height="191" fill={YELLOW} />
    <path d="M757 733l67-13 25 23-54 12-23-3-13-9z" fill={GREY} />
    <path d="M758 736l14 17 23 3 54-12v5l-55 12-23-3-13-12z" fill="#dcd99c" stroke="#777" strokeWidth="0.5" />
    <path d="M759 739l64-15" stroke={YELLOW} strokeWidth="2.4" />
    <path d="M762 726l60-14" stroke={WIRE} strokeWidth="0.7" />
    <path d="M764 745l60-13 20 8" fill="none" stroke={WIRE} strokeWidth="0.7" />
    <rect x="821" y="717" width="7" height="7" fill="#fff" stroke={WIRE} strokeWidth="0.6" />

    {/* front wall */}
    <path d="M982 660l760-175 5 6v14l-4 18L982 702z" fill="#527f88" />
    <path d="M982 696l761-177v6L982 704z" fill="#b39c32" stroke="#3a3a20" strokeWidth="0.6" />
    <path d="M984 672l758-174M984 688l758-175" stroke={WIRE} strokeWidth="0.8" />
    <path d="M1025 666c5 0 4 5 1 6 3 1 4 6-1 6M1133 640c5 0 4 5 1 6 3 1 4 6-1 6" fill="none" stroke={WIRE} strokeWidth="0.8" />
    <path d="M1738 472l7 3 2 5v22l-3 3v-17z" fill="#c8cf9e" stroke="#6f6f4a" strokeWidth="0.6" />
    <path d="M1600 338l142 134" stroke="#5f5c30" strokeWidth="2.5" />

    {/* plate */}
    <path d="M832 524l6-8 142 135-5 11z" fill={YELLOW} />
    <path d="M843 518L1591 341l146 131-757 175z" fill={PLATE} />
    <path d="M841 512L1592 335l4 6L843 518z" fill="#728ea4" />
    <path d="M923 497l584-139v3L923 503z" fill={YELLOW} />
    <path d="M980 647l757-175 4 15-757 176z" fill={PALE} />

    {/* wires through plate */}
    <g fill="none" stroke={WIRE} strokeWidth="0.8" opacity="0.9">
      <path d="M1596 340v195M1602 338v200" />
      <path d="M1628 358v118M1646 358v118M1628 476l10 12 8-12" />
      <path d="M1668 408v125" />
      <path d="M1638 488l-20 55M1644 490l-16 50" />
      <path d="M1655 436l45 50 30 35M1600 525l12 20 50-10" />
      <path d="M1600 545l56-12" />
      <path d="M1716 497l28 25" />
    </g>

    {/* holes */}
    <Hole x={946} y={539} rx={36} ry={17} />
    <Pair x={926} y={519} />
    <Pair x={967} y={558} />
    <Hole x={1052} y={516} rx={36} ry={17} />
    <Pair x={1032} y={494} />
    <Pair x={1072} y={533} />
    <Hole x={1007} y={596} rx={36} ry={17} />
    <Pair x={986} y={577} />
    <Pair x={1027} y={615} />
    <Hole x={1113} y={571} rx={36} ry={17} />
    <Pair x={1092} y={552} />
    <Pair x={1133} y={590} />
    <Hole x={1573} y={391} rx={30} ry={15} />
    <Hole x={1636} y={448} rx={30} ry={13} inner="#72868f" />
    <Hole x={1483} y={413} rx={12} ry={8} drop={4} inner="#e8ecd4" />
    <Hole x={1544} y={470} rx={12} ry={8} drop={4} inner="#e8ecd4" />
    <Slot x1={1160} y1={487} x2={1228} y2={468} />
    <Pair x={1144} y={491} />
    <Pair x={1245} y={467} />
    <Slot x1={1326} y1={451} x2={1366} y2={440} />
    <Pair x={1309} y={453} />
    <Pair x={1384} y={434} />
    <Slot x1={1220} y1={548} x2={1382} y2={506} />
    <Pair x={1206} y={548} />
    <Pair x={1398} y={503} />

    {/* highlighted outline */}
    <g fill="none" stroke={ORANGE} strokeWidth="2">
      <path d="M838 514L1592 335l148 138" />
      <path d="M843 519L1591 342l137 128" />
      <path d="M838 514l147 140" />
      <path d="M843 519l137 128" />
      <path d="M980 647l757-175" />
      <path d="M982 652l757-175" />
      <path d="M983 657l757-175" />
      <path d="M985 663l755-175" />
      <path d="M1737 472l4 15" />
      <path d="M924 497v6M1507 356v8" />
    </g>

    {/* axes */}
    <path d="M977 587v76" stroke="#1070e0" strokeWidth="1.5" />
    <path d="M975 660l-10-20" stroke="#0f8040" strokeWidth="2" />
    <path d="M961 640l7-5 3 6-7 5z" fill="#0f8040" />
    <path d="M944 629l3 6 3-6M947 635v5" fill="none" stroke="#30d070" strokeWidth="0.8" />
    <path d="M972 598h7" stroke="#1070e0" strokeWidth="1.5" />
    <path d="M1024 648l8-2" stroke="#d060a0" strokeWidth="1.5" />
  </ModelCanvas>
);

/* ---------- data ---------- */
type NodeKind = "nFlange" | "nBend" | "nBox" | "nJoin";
const treeNodes: [NodeKind, string, boolean?][] = [
  ["nFlange", "凸缘_1", true],
  ["nBend", "折弯(B)_1", true],
  ["nFlange", "凸缘_2"],
  ["nBend", "折弯(B)_2"],
  ["nFlange", "凸缘_3"],
  ["nBox", "折弯(B)_3"],
  ["nBox", "折弯(B)_4"],
  ["nBend", "折弯(B)_5"],
  ["nFlange", "凸缘_4"],
  ["nBend", "折弯(B)_4"],
  ["nFlange", "凸缘_5"],
  ["nBox", "转角止裂槽_1"],
  ["nJoin", "接合_1"],
  ["nBend", "折弯(B)_5"],
  ["nFlange", "凸缘_6"],
  ["nBox", "转角止裂槽_2"],
  ["nJoin", "接合_2"],
  ["nBend", "折弯(B)_6"],
  ["nFlange", "凸缘_7"],
  ["nBox", "转角止裂槽_3"],
  ["nBend", "折弯(B)_7"],
  ["nFlange", "凸缘_8"],
];

type Prop = { name: string; value?: string; dim?: boolean; plus?: boolean; swatch?: boolean; line?: number };
const sections: { title: string; rows: Prop[] }[] = [
  {
    title: "常规",
    rows: [
      { name: "颜色", value: "依图层(BL)", swatch: true },
      { name: "图层", value: "0" },
      { name: "线型", value: "依图层(BL)", line: 1 },
      { name: "线型比例", value: "1" },
      { name: "线宽", value: "依图层(BL)", line: 3 },
      { name: "透明度", value: "依图层(BL)" },
      { name: "立面图", value: "0 mm" },
    ],
  },
  {
    title: "视图",
    rows: [
      { name: "相机", value: "132.73, -7.35, -101.56", plus: true },
      { name: "目标", value: "131.73, -6.35, -102.56", plus: true },
      { name: "透视", value: "关闭" },
      { name: "镜头长度", value: "50 mm" },
      { name: "视角", value: "38.58" },
      { name: "高度", value: "216.53 mm", dim: true },
      { name: "宽度", value: "351.93 mm", dim: true },
      { name: "裁剪", value: "关闭" },
      { name: "前平面", value: "1.73 mm" },
      { name: "背平面", value: "0 mm" },
      { name: "视觉样式", value: "着色" },
    ],
  },
  {
    title: "杂项",
    rows: [
      { name: "注释比例", value: "1:1" },
      { name: "默认照明", value: "关闭" },
    ],
  },
];

const tabs = ["常用", "徒手描绘", "实体", "曲面", "钣金", "装配", "批注", "视图", "设置", "工具"];

const RailIcon = ({ children }: { children: React.ReactNode }) => (
  <svg width="26" height="28" viewBox="0 0 26 28" fill="none" stroke="#a0a0a0" strokeWidth="1.2">
    {children}
  </svg>
);

const CloseX = () => (
  <svg width="16" height="16" viewBox="0 0 16 16">
    <path d="M1 1l14 14M15 1L1 15" stroke="#777" strokeWidth="1.5" />
  </svg>
);

const App = () => (
  <Page>
    <GlobalStyle />
    <Defs />
    <TabBar>
      <Grip />
      <LogoBox>
        <LogoIcon />
      </LogoBox>
      {tabs.map((t) => (
        <Tab key={t} $active={t === "钣金"}>
          {t}
        </Tab>
      ))}
    </TabBar>

    <Ribbon>
      <RibbonGrip>
        <i />
        <i />
        <i />
        <i />
        <i />
        <i />
      </RibbonGrip>
      <Group $w={121}>
        <GroupBody>
          <BigBtn $w={120}>
            <BigIcon>
              <Big n="ucs" />
            </BigIcon>
            <span>将UCS对齐到面</span>
            <CaretLine>
              <Caret />
            </CaretLine>
          </BigBtn>
        </GroupBody>
        <GroupLabel>平面</GroupLabel>
      </Group>
      <Group $w={219}>
        <GroupBody $pad={8}>
          <BigBtn $w={50}>
            <BigIcon>
              <Big n="pline" />
            </BigIcon>
            <span>多段线</span>
            <CaretLine>
              <Caret />
            </CaretLine>
          </BigBtn>
          <BigBtn $w={48}>
            <BigIcon>
              <Big n="circle" />
            </BigIcon>
            <span>圆</span>
            <CaretLine>
              <Caret />
            </CaretLine>
          </BigBtn>
          <BigBtn $w={40}>
            <BigIcon>
              <Big n="rect" w={32} h={32} />
            </BigIcon>
            <span>矩形</span>
            <CaretLine>
              <Caret />
            </CaretLine>
          </BigBtn>
          <SmallCol $ml={5}>
            <Small n="project" t="投影" />
            <Small n="ellipse" t="椭圆" caret />
            <Small n="boundary" t="边界" caret />
          </SmallCol>
        </GroupBody>
        <GroupLabel>绘图</GroupLabel>
      </Group>
      <Group $w={281}>
        <GroupBody $pad={7}>
          <BigBtn $w={70}>
            <BigIcon>
              <Big n="baseFlange" />
            </BigIcon>
            <span>基材凸缘</span>
          </BigBtn>
          <BigBtn $w={68}>
            <BigIcon>
              <Big n="loft" />
            </BigIcon>
            <span>钣金混成</span>
            <CaretLine>
              <Caret />
            </CaretLine>
          </BigBtn>
          <BigBtn $w={87}>
            <BigIcon>
              <Big n="convert" />
            </BigIcon>
            <span>转换至钣金</span>
          </BigBtn>
          <BigBtn $w={43}>
            <BigIcon>
              <Big n="quick" />
            </BigIcon>
            <span>快速</span>
          </BigBtn>
        </GroupBody>
        <GroupLabel>创建</GroupLabel>
      </Group>
      <Group $w={377}>
        <GroupBody $pad={2}>
          <BigBtn $w={62}>
            <BigIcon>
              <Big n="edgeFlange" />
            </BigIcon>
            <span>边凸缘</span>
            <CaretLine>
              <Caret />
            </CaretLine>
          </BigBtn>
          <SmallCol $w={90}>
            <Small n="bend" t="折弯(B)" caret />
            <Small n="join" t="接合" caret />
            <Small n="split" t="分割" caret />
          </SmallCol>
          <SmallCol $w={90}>
            <Small n="relief" t="止裂槽" caret />
            <Small n="tag" t="标签" caret />
            <Small n="form" t="成形(F)" caret />
          </SmallCol>
          <SmallCol $w={66}>
            <Small n="hem" t="折边" caret />
            <Small n="jog" t="点动" />
            <Small n="roll" t="卷边" />
          </SmallCol>
          <SmallCol>
            <Small n="unbend" t="解除" />
            <Small n="delFeat" t="删除" />
            <Small n="bomb" t="分解" />
          </SmallCol>
        </GroupBody>
        <GroupLabel>修改</GroupLabel>
      </Group>
      <Group $w={151}>
        <GroupBody $pad={10}>
          <SmallCol $w={75}>
            <Small n="stretch" t="拉伸" />
            <Small n="pushpull" t="推/拉" />
            <Small n="move" t="移动" />
          </SmallCol>
          <SmallCol>
            <Small n="imprint" t="压印" caret />
            <Small n="shell" t="薄壳" />
            <Small n="redx" t="删除" />
          </SmallCol>
        </GroupBody>
        <GroupLabel>编辑</GroupLabel>
      </Group>
      <Group $w={229}>
        <GroupBody>
          <BigBtn $w={96}>
            <BigIcon>
              <Big n="fx" />
            </BigIcon>
            <span>自动参数化</span>
          </BigBtn>
          <IconGrid $cols="24px 24px 24px 24px 36px">
            <Icon n="pa1" />
            <Icon n="pa2" />
            <Icon n="pa3" />
            <Icon n="pa4" />
            <IconCell>
              <XTen>
                X=
                <br />
                10
              </XTen>
              <Caret />
            </IconCell>
            <Icon n="pb1" />
            <Icon n="pb2" />
            <Icon n="pb3" />
            <Icon n="pb4" />
            <Sized n="pb5" caret />
            <Icon n="pc1" />
            <Icon n="pc2" />
            <Icon n="pc3" />
            <Icon n="pc4" />
            <Sized n="pc5" caret />
          </IconGrid>
        </GroupBody>
        <GroupLabel>参数化</GroupLabel>
      </Group>
      <Group $w={113}>
        <GroupBody $pad={8}>
          <IconGrid $cols="34px 34px 34px">
            <Sized n="sa1" caret />
            <Sized n="sa2" caret />
            <Sized n="sa3" caret />
            <Sized n="sb1" caret />
            <Sized n="sb2" />
            <Sized n="sb3" />
            <Sized n="sc1" />
            <Sized n="sc2" caret />
            <Sized n="sc3" />
          </IconGrid>
        </GroupBody>
        <GroupLabel>选取</GroupLabel>
      </Group>
      <Group $w={122}>
        <GroupBody>
          <BigBtn $w={54}>
            <BigIcon>
              <Big n="repair" />
            </BigIcon>
            <span>修复</span>
            <CaretLine>
              <Caret />
            </CaretLine>
          </BigBtn>
          <SmallCol>
            <Small n="simplify" t="简化" />
            <Small n="stitch" t="拼接" />
            <Small n="check" t="检核" />
          </SmallCol>
        </GroupBody>
        <GroupLabel>修复</GroupLabel>
      </Group>
      <Group $w={158}>
        <GroupBody>
          <BigBtn $w={64}>
            <BigIcon>
              <Big n="dxf" />
            </BigIcon>
            <span>导出至</span>
            <SecondLine>
              .dxf <Caret />
            </SecondLine>
          </BigBtn>
          <BigBtn $w={84}>
            <BigIcon>
              <Big n="dxfAsm" />
            </BigIcon>
            <span>
              导出装配<Dotted>...</Dotted>
            </span>
            <CaretLine>
              <Caret />
            </CaretLine>
          </BigBtn>
        </GroupBody>
        <GroupLabel>展平</GroupLabel>
      </Group>
      <Group $w={80} $last>
        <GroupBody $pad={6}>
          <BigBtn $w={70} $on>
            <BigIcon>
              <Big n="feature" />
            </BigIcon>
            <span>特征颜色</span>
          </BigBtn>
        </GroupBody>
        <GroupLabel>视图</GroupLabel>
      </Group>
    </Ribbon>

    <Body>
      <SplitDots>
        <i />
        <i />
        <i />
        <i />
      </SplitDots>
      <LeftDock>
        <Rail>
          <RailTab $h={60}>
            <RailIcon>
              <path d="M7 2h12l-3 17h-6zM10 22h6v5h-6z" />
            </RailIcon>
          </RailTab>
          <RailTab $h={57} $on>
            <RailIcon>
              <path d="M13 6L3 11v11l10 5 10-5V11zM3 11l10 5 10-5M13 16v11" />
              <ellipse cx="13" cy="5" rx="4" ry="3" />
            </RailIcon>
          </RailTab>
          <RailTab $h={57}>
            <RailIcon>
              <path d="M13 1C6 1 2 5 2 10c0 5 6 9 9 12h4c3-3 9-7 9-12 0-5-4-9-11-9zM13 1c-3 0-5 4-5 9s2 9 3 12M13 1c3 0 5 4 5 9s-2 9-3 12M2 10c3-1 19-1 22 0" />
              <rect x="11" y="23" width="4" height="4" />
            </RailIcon>
          </RailTab>
        </Rail>
        <BrowserPanel>
          <BrowserTools>
            <svg width="16" height="16" viewBox="0 0 16 16" fill="#fff" stroke="#555">
              <path d="M1 1h4v3H1zM3 4v7h2M6 8h9v7H6zM9 11h3v2H9z" />
            </svg>
            <svg width="16" height="16" viewBox="0 0 16 16" fill="#fff" stroke="#555">
              <path d="M1 1h4v3H1zM3 4v7h2M6 8h9v7H6z" />
              <rect x="9" y="11" width="3" height="2" stroke="#d02020" fill="#d02020" />
            </svg>
            <svg width="16" height="16" viewBox="0 0 16 16" fill="none" stroke="#555">
              <path d="M1 1h5v5H1zM1 10h5v5H1zM3.5 6v4" />
              <text x="9" y="6" fontSize="7" fill="#555" stroke="none" fontFamily="Open Sans">A</text>
              <text x="9" y="15" fontSize="7" fill="#555" stroke="none" fontFamily="Open Sans">Z</text>
            </svg>
            <ToolSep />
            <svg width="16" height="16" viewBox="0 0 16 16" fill="none" stroke="#888">
              <circle cx="6" cy="6" r="4.5" strokeWidth="2" strokeDasharray="2 1" />
              <rect x="8" y="8" width="8" height="8" fill="#fff" stroke="#666" />
              <path d="M10 11h4M10 13h4" stroke="#3f6fb0" />
            </svg>
            <ToolSep />
            <svg width="16" height="16" viewBox="0 0 16 16" fill="#666" stroke="#555">
              <path d="M3 1h3v6H3zM10 1h3v6h-3zM1 7h6v8H1zM9 7h6v8H9z" fill="#fff" />
              <path d="M1 10h6v5H1zM9 10h6v5H9z" fill="#777" />
            </svg>
          </BrowserTools>
          <TreeBox>
            <TreeScroll>
              <TreeTrunk>
                <TreeRow $first>
                  <Dots $w={7} />
                  <Expander />
                  <Dots $w={12} />
                  <svg width="12" height="18" viewBox="0 0 12 18" fill="#ddd" stroke="#555">
                    <path d="M1 1h10v3H8v12l-2 1-2-1V4H1z" />
                    <path d="M4 7h4M4 10h4M4 13h4" />
                  </svg>
                  <PlainLabel $ml={7}>Hole:29</PlainLabel>
                </TreeRow>
                <TreeRow>
                  <Elbow $left={14} $w={8} $up={7} $h={21} />
                  <Expander />
                  <Dots $w={11} />
                  <svg width="16" height="14" viewBox="0 0 16 14" fill="#eee" stroke="#555">
                    <path d="M1 2h5l1 2h5v2H4L1 12zM1 12l3-6h11l-3 6z" />
                  </svg>
                  <PlainLabel $ml={5}>参数</PlainLabel>
                </TreeRow>
                <TreeRow>
                  <Elbow $left={29} $w={33} $up={7} $h={21} />
                  <Svg width="12" height="14" viewBox="0 0 12 14" fill="#ccc" stroke="#555" $ml={4}>
                    <path d="M3 6V3.5a3 3 0 0 1 6 0V6" fill="none" />
                    <rect x="1" y="6" width="10" height="7" />
                    <path d="M1 8h10M1 10h10" />
                  </Svg>
                  <PlainLabel $ml={4}>Diameter = 3</PlainLabel>
                </TreeRow>
                <TreeRow>
                  <Elbow $left={29} $w={33} $up={14} $h={28} />
                  <svg width="16" height="14" viewBox="0 0 16 14" stroke="#555">
                    <path d="M1 5V3a2.5 2.5 0 0 1 5 0" fill="none" />
                    <rect x="5" y="5" width="10" height="8" fill="#e4c474" stroke="#8a6a20" />
                    <path d="M5 8h10M5 10h10" stroke="#8a6a20" />
                  </svg>
                  <PlainLabel $ml={4}>Depth = 40 mm</PlainLabel>
                </TreeRow>
                {treeNodes.map(([kind, label, sel], i) => (
                  <TreeRow key={i}>
                    <Dots $w={32} />
                    <Icon n={kind} s={16} />
                    <NodeLabel $sel={sel}>{label}</NodeLabel>
                  </TreeRow>
                ))}
              </TreeTrunk>
            </TreeScroll>
            <ScrollTrack>
              <ScrollThumb />
            </ScrollTrack>
          </TreeBox>
        </BrowserPanel>
      </LeftDock>
      <Gutter />
      <Center>
        <DocTabs>
          <DocTab $w={94}>
            开始
            <CloseX />
          </DocTab>
          <DocTab $w={137} $on>
            钣金零件*
            <CloseX />
          </DocTab>
          <AddTab>
            <svg width="16" height="16" viewBox="0 0 16 16">
              <path d="M8 0v16M0 8h16" stroke="#333" strokeWidth="1.3" />
            </svg>
          </AddTab>
          <TabFill />
        </DocTabs>
        <Viewport>
          <Model />
        </Viewport>
      </Center>
      <Gutter />
      <RightDock>
        <PropPanel>
          <PropTop>
            <Combo>
              未选取
              <Svg width="12" height="7" viewBox="0 0 12 7" $mt={3}>
                <path d="M1 1l5 5 5-5" fill="none" stroke="#333" />
              </Svg>
            </Combo>
            <ToolBtn>
              <svg width="18" height="18" viewBox="0 0 18 18">
                <path d="M1 2h14l-5 7v6l-4 2V9z" fill="#ddd" stroke="#666" />
                <path d="M1 2h14" stroke="#666" strokeWidth="2" />
                <path d="M13 8l-4 5h3l-2 4 5-6h-3l2-3z" fill="#f5a020" stroke="#e05010" strokeWidth="0.5" />
              </svg>
            </ToolBtn>
            <ToolBtn $on>
              <svg width="18" height="14" viewBox="0 0 18 14">
                <path d="M1 7c4-7 12-7 16 0-4 7-12 7-16 0z" fill="#e4ecf4" stroke="#445" />
                <circle cx="9" cy="7" r="3.5" fill="#567" />
              </svg>
            </ToolBtn>
          </PropTop>
          {sections.map((sec) => (
            <div key={sec.title}>
              <PropHeader>
                <ExpandCell>
                  <Expander />
                </ExpandCell>
                <HeaderText>{sec.title}</HeaderText>
              </PropHeader>
              {sec.rows.map((r) => (
                <PropRow key={r.name}>
                  <ExpandCell>{r.plus && <Expander $plus />}</ExpandCell>
                  <PropName>{r.name}</PropName>
                  <PropValue $dim={r.dim}>
                    {r.swatch && <Swatch />}
                    {r.line && <LineSample $h={r.line} />}
                    {r.value}
                  </PropValue>
                </PropRow>
              ))}
            </div>
          ))}
        </PropPanel>
        <Rail>
          <RailTab $h={58} $on>
            <svg width="26" height="22" viewBox="0 0 26 22" fill="#fff" stroke="#888">
              <path d="M1 3h24M1 11h24M1 19h24" />
              <circle cx="8" cy="3" r="2.5" />
              <circle cx="19" cy="11" r="2.5" />
              <circle cx="12" cy="19" r="2.5" />
            </svg>
          </RailTab>
          <RailTab $h={58}>
            <svg width="26" height="26" viewBox="0 0 26 26" fill="none" stroke="#9a9a9a" strokeWidth="1.2">
              <path d="M13 1l11 6-11 6L2 7z" />
              <path d="M2 12l11 6 11-6M2 17l11 6 11-6" />
            </svg>
          </RailTab>
        </Rail>
      </RightDock>
    </Body>

    <Menu>
      <MenuItem>
        <MenuIcon>
          <Icon n="disable" s={17} />
        </MenuIcon>
        禁用
      </MenuItem>
      <MenuItem>
        <MenuIcon>
          <Icon n="clean" s={17} />
        </MenuIcon>
        解除
      </MenuItem>
      <MenuItem>
        <MenuIcon>
          <Icon n="redx" s={17} />
        </MenuIcon>
        删除
      </MenuItem>
      <MenuSep />
      <MenuItem>
        <MenuIcon>
          <Icon n="zoomTo" s={17} />
        </MenuIcon>
        缩放到
      </MenuItem>
      <MenuItem>
        <MenuIcon>
          <Icon n="pointer" s={17} />
        </MenuIcon>
        选取
      </MenuItem>
      <MenuSep />
      <MenuItem $tall>
        <MenuIcon />
        重新校准相似节点
      </MenuItem>
      <MenuSep />
      <MenuItem $tall>
        <MenuIcon />
        全部折叠
      </MenuItem>
      <MenuItem $tall>
        <MenuIcon />
        全部展开
      </MenuItem>
    </Menu>
    <Tooltip>
      捕获矩形区域
      <TipKeys>&lt;Ctrl+Alt+A&gt;</TipKeys>
    </Tooltip>
  </Page>
);

export default App;
